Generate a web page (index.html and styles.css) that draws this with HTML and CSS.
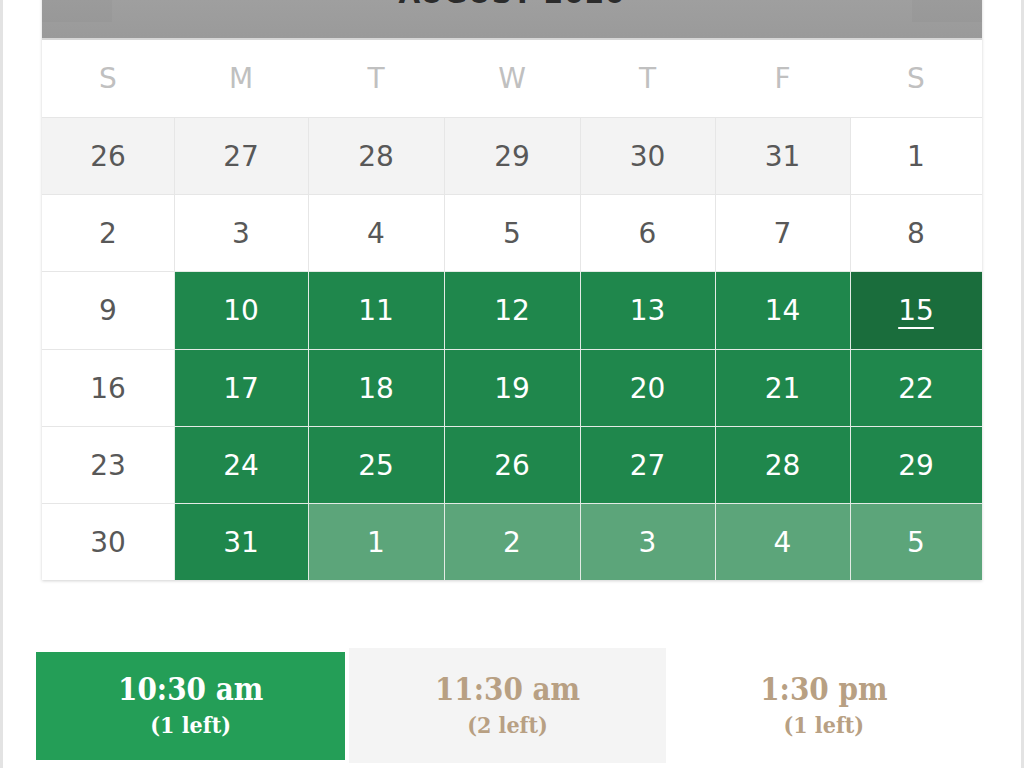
FILE: index.html
```html
<!DOCTYPE html>
<html lang="en">

<head>
  <meta charset="UTF-8">
  <title>Book a Session</title>
  <link rel="stylesheet" href="styles.css">
</head>

<body>
  <div class="page">
    <div class="calendar">
      <div class="cal-header">
        <span class="nav nav-prev"></span>
        <h2 class="month">August 2020</h2>
        <span class="nav nav-next"></span>
      </div>

      <div class="weekdays">
        <div>S</div>
        <div>M</div>
        <div>T</div>
        <div>W</div>
        <div>T</div>
        <div>F</div>
        <div>S</div>
      </div>

      <div class="days">
        <div class="day other">26</div>
        <div class="day other">27</div>
        <div class="day other">28</div>
        <div class="day other">29</div>
        <div class="day other">30</div>
        <div class="day other">31</div>
        <div class="day">1</div>

        <div class="day">2</div>
        <div class="day">3</div>
        <div class="day">4</div>
        <div class="day">5</div>
        <div class="day">6</div>
        <div class="day">7</div>
        <div class="day">8</div>

        <div class="day">9</div>
        <div class="day open">10</div>
        <div class="day open">11</div>
        <div class="day open">12</div>
        <div class="day open">13</div>
        <div class="day open">14</div>
        <div class="day open today"><span>15</span></div>

        <div class="day">16</div>
        <div class="day open">17</div>
        <div class="day open">18</div>
        <div class="day open">19</div>
        <div class="day open">20</div>
        <div class="day open">21</div>
        <div class="day open">22</div>

        <div class="day">23</div>
        <div class="day open">24</div>
        <div class="day open">25</div>
        <div class="day open">26</div>
        <div class="day open">27</div>
        <div class="day open">28</div>
        <div class="day open">29</div>

        <div class="day">30</div>
        <div class="day open">31</div>
        <div class="day open next">1</div>
        <div class="day open next">2</div>
        <div class="day open next">3</div>
        <div class="day open next">4</div>
        <div class="day open next">5</div>
      </div>
    </div>

    <div class="slots">
      <div class="slot selected">
        <span class="time">10:30 am</span>
        <span class="left">(1 left)</span>
      </div>
      <div class="slot alt">
        <span class="time">11:30 am</span>
        <span class="left">(2 left)</span>
      </div>
      <div class="slot">
        <span class="time">1:30 pm</span>
        <span class="left">(1 left)</span>
      </div>
    </div>
  </div>
</body>

</html>
```

FILE: styles.css
```css
html {
  background: white;
}

body {
  margin: 0;
  font-family: "DejaVu Sans", Verdana, sans-serif;
}

.page {
  border-left: 3px solid #e3e3e3;
  border-right: 3px solid #e3e3e3;
  padding: 0 39px 20px;
  margin-top: -38px;
}

.calendar {
  background: white;
  box-shadow: 0 1px 3px rgba(0, 0, 0, 0.18);
}

.cal-header {
  display: flex;
  align-items: flex-start;
  height: 76px;
  background: linear-gradient(#a4a4a4, #9a9a9a);
  border-bottom: 2px solid #d6d6d6;
}

.nav {
  width: 70px;
  height: 60px;
  background: rgba(0, 0, 0, 0.025);
}

.month {
  flex: 1;
  margin: 0;
  padding-top: 14px;
  text-align: center;
  text-transform: uppercase;
  font-size: 28px;
  line-height: 36px;
  font-weight: bold;
  letter-spacing: 1px;
  color: #2b2b2b;
}

.weekdays,
.days {
  display: grid;
  grid-template-columns: 132fr 134fr 136fr 136fr 135fr 135fr 132fr;
}

.weekdays {
  height: 77px;
  align-items: center;
  text-align: center;
  font-size: 28px;
  color: #c0c0c0;
}

.days {
  grid-auto-rows: 77.2px;
}

.day {
  display: flex;
  align-items: center;
  justify-content: center;
  padding-top: 2px;
  font-size: 28px;
  color: #585858;
  box-shadow: inset 1px 1px 0 #e6e6e6;
}

.day:nth-child(7n+1) {
  box-shadow: inset 0 1px 0 #e6e6e6;
}

.other {
  background: #f3f3f3;
}

.open {
  background: #1f874c;
  color: white;
  box-shadow: inset 1px 1px 0 #e3ebe5;
}

.next {
  background: #5ca57a;
}

.today {
  background: #1a6d3c;
}

.today span {
  text-decoration: underline;
  text-decoration-thickness: 2px;
  text-underline-offset: 7px;
}

.slots {
  display: grid;
  grid-template-columns: repeat(3, 1fr);
  margin: 68px 0 0 -9px;
}

.slot {
  height: 115px;
  box-sizing: border-box;
  display: flex;
  flex-direction: column;
  align-items: center;
  justify-content: center;
  font-family: "DejaVu Serif Condensed", "DejaVu Serif", serif;
  font-weight: bold;
  color: #b8a083;
}

.slot.alt {
  background: #f4f4f4;
}

.slot.selected {
  background: #249e57;
  border: solid white;
  border-width: 4px 4px 3px 3px;
  color: white;
}

.time {
  font-size: 31px;
  line-height: 38px;
}

.left {
  font-size: 23px;
  line-height: 34px;
}
```
